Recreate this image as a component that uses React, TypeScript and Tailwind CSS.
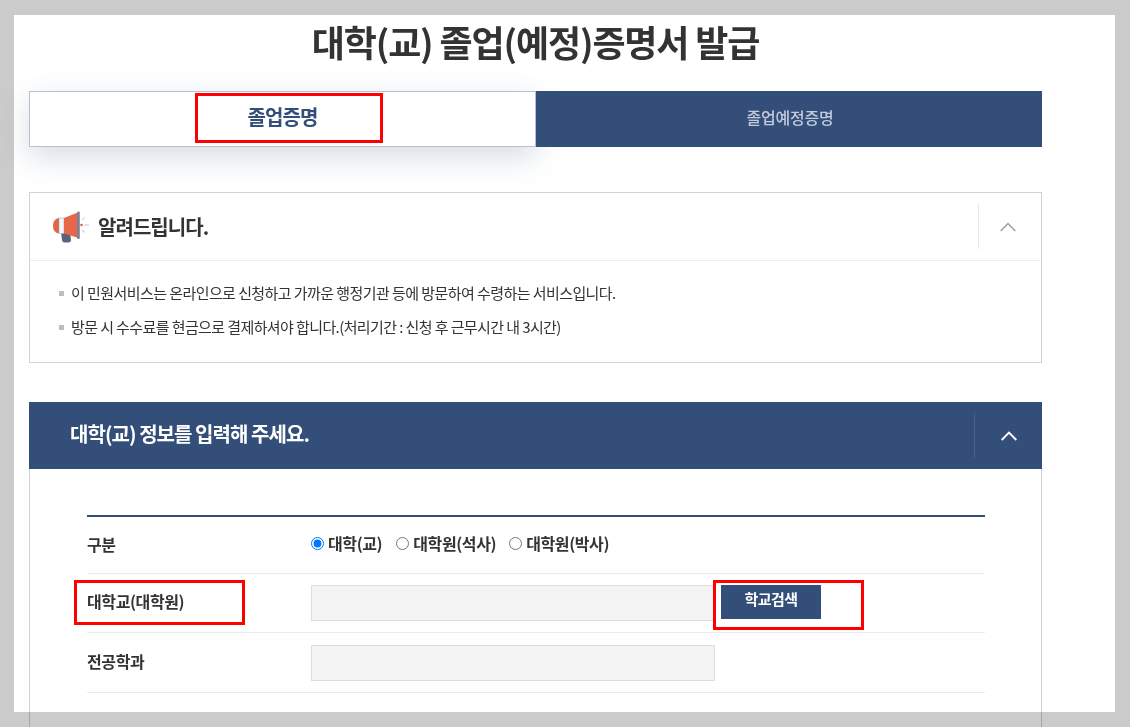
const font = { fontFamily: '"Noto Sans CJK KR", "Noto Sans", sans-serif' };

function Chevron({ className, sw }: { className: string; sw: string }) {
  return (
    <svg width="16" height="10" viewBox="0 0 16 10" fill="none" className={className}>
      <path d="M0.700 9 L8 1.500 L15.300 9" stroke="currentColor" strokeWidth={sw} />
    </svg>
  );
}

function Megaphone() {
  return (
    <svg width="38" height="34" viewBox="0 0 38 34" fill="none">
      <path d="M9 22 L18 22 L19 30 Q19 32.500 16 32.500 L12.500 32.500 Q10.500 32.500 10 30 Z" fill="#57647c" />
      <path d="M7 8 L7 23.500 Q1 22.500 1 15.700 Q1 9 7 8 Z" fill="#e0654a" />
      <rect x="7" y="8" width="5" height="15.500" fill="#f6f6f8" stroke="#9aa1b1" strokeWidth="0.5" />
      <path d="M12 8 L25 2.800 L25 27.500 L12 23.500 Z" fill="#e8674a" />
      <rect x="25" y="1.500" width="2.800" height="27.500" rx="1.300" fill="#7a8296" />
      <circle cx="29.500" cy="15" r="1.300" fill="#e0654a" />
      <path d="M32 15 L37 15 M30 10 L33 7.500 M30 20 L33 22.500" stroke="#b8bdc9" strokeWidth="0.900" />
    </svg>
  );
}

function Radio({ label, checked }: { label: string; checked?: boolean }) {
  return (
    <label className="flex items-center gap-[4px]">
      <input type="radio" name="kind" defaultChecked={checked} className="m-0 h-[13px] w-[13px] accent-[#0075ff]" />
      <span className="text-[16px] font-bold leading-[22px] tracking-[-0.4px] text-[#333]">{label}</span>
    </label>
  );
}

function Row({ label, children, className, labelClass }: { label: string; children: React.ReactNode; className: string; labelClass?: string }) {
  return (
    <div className={`flex items-start border-b border-[#ebebeb] ${className}`}>
      <div className={`w-[224px] shrink-0 text-[16px] font-bold leading-[22px] tracking-[-0.4px] text-[#333] ${labelClass ?? ""}`}>{label}</div>
      {children}
    </div>
  );
}

export default function App() {
  return (
    <div className="relative h-[727px] w-[1130px] overflow-hidden bg-[#cbcbcb] pl-[14px] pr-[15px] pt-[15px]" style={font}>
      <div className="h-[712px] bg-white px-[15px]">
        <div className="w-[1013px]">
          <h1 className="h-[76px] pt-[1px] text-center text-[36px] font-bold leading-[50px] tracking-[-1.15px] text-[#333]">
            대학(교) 졸업(예정)증명서 발급
          </h1>

          <div className="flex h-[56px]">
            <div className="flex w-[507px] items-center justify-center border border-[#b5c0d8] bg-white pb-[4px] text-[20px] font-bold tracking-[-0.9px] text-[#344e7a] shadow-[0_10px_30px_rgba(52,78,122,0.2)]">
              졸업증명
            </div>
            <div className="flex flex-1 items-center justify-center bg-[#344e7a] pb-[4px] pl-[2px] text-[16px] font-medium tracking-[-0.2px] text-[#c3cbdb]">
              졸업예정증명
            </div>
          </div>

          <section className="mt-[45px] h-[171px] border border-[#d2d2d2]">
            <div className="flex h-[68px] items-center border-b border-[#ececec] pl-[22px]">
              <Megaphone />
              <h2 className="ml-[8px] text-[20px] font-bold leading-[28px] tracking-[-0.95px] text-[#333]">알려드립니다.</h2>
              <div className="ml-auto flex h-[45px] w-[63px] items-center justify-center border-l border-[#e6e6e6] pr-[4px]">
                <Chevron className="text-[#9b9b9b]" sw="1.3" />
              </div>
            </div>
            <ul className="flex flex-col gap-[13px] pl-[29px] pt-[21px]">
              <li className="flex items-center text-[15px] leading-[22px] tracking-[-0.57px] text-[#333]">
                <span className="mr-[7px] h-[5px] w-[5px] bg-[#bdbdbd]" />
                이 민원서비스는 온라인으로 신청하고 가까운 행정기관 등에 방문하여 수령하는 서비스입니다.
              </li>
              <li className="-mt-[1px] flex items-center text-[15px] leading-[22px] tracking-[-0.6px] text-[#333]">
                <span className="mr-[7px] h-[5px] w-[5px] bg-[#bdbdbd]" />
                방문 시 수수료를 현금으로 결제하셔야 합니다.(처리기간 : 신청 후 근무시간 내 3시간)
              </li>
            </ul>
          </section>

          <section className="mt-[39px]">
            <div className="flex h-[67px] items-center bg-[#344e7a] pl-[41px]">
              <h2 className="pb-[4px] text-[20px] font-bold leading-[26px] tracking-[-0.95px] text-white">대학(교) 정보를 입력해 주세요.</h2>
              <div className="ml-auto flex h-[45px] w-[68px] items-center justify-center border-l border-[#4a6290]">
                <Chevron className="text-white" sw="1.8" />
              </div>
            </div>
            <div className="h-[300px] border border-t-0 border-[#d2d2d2] px-[57px] pt-[46px]">
              <div className="w-[898px] border-t-2 border-[#344e7a]">
                <Row label="구분" className="h-[57px] pt-[16px]">
                  <div className="-mt-[1px] flex items-center">
                    <Radio label="대학(교)" checked />
                    <div className="ml-[14px]"><Radio label="대학원(석사)" /></div>
                    <div className="ml-[13px]"><Radio label="대학원(박사)" /></div>
                  </div>
                </Row>
                <Row label="대학교(대학원)" className="h-[59px] pt-[11px]" labelClass="mt-[5px]">
                  <div className="flex">
                    <div className="h-[36px] w-[404px] border border-[#dedede] bg-[#f4f4f4]" />
                    <button className="ml-[6px] h-[34px] w-[100px] bg-[#344e7a] pb-[6px] text-[15px] font-bold tracking-[-0.5px] text-white">학교검색</button>
                  </div>
                </Row>
                <Row label="전공학과" className="h-[60px] pt-[17px]">
                  <div className="-mt-[5px] h-[36px] w-[404px] border border-[#dedede] bg-[#f4f4f4]" />
                </Row>
              </div>
            </div>
          </section>
        </div>
      </div>

      <div className="absolute bottom-0 left-[14px] h-[15px] w-[1101px] bg-[#cbcbcb] mix-blend-multiply" />
      <div className="absolute left-[195px] top-[93px] h-[50px] w-[188px] border-[3px] border-[#ff0000]" />
      <div className="absolute left-[74px] top-[580px] h-[45px] w-[171px] border-[3px] border-[#ff0000]" />
      <div className="absolute left-[713px] top-[580px] h-[50px] w-[151px] border-[3px] border-[#ff0000]" />
    </div>
  );
}
